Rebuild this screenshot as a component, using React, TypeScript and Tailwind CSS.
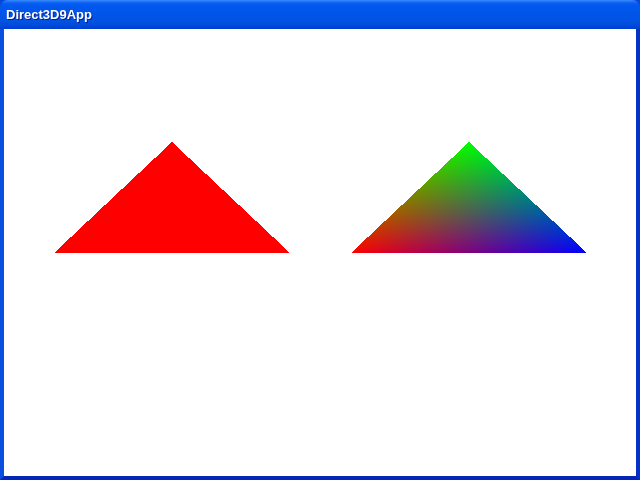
import React from "react";

export default function App() {
  return (
    <div className="w-[640px] h-[480px] flex flex-col bg-[#0846d8] overflow-hidden">
      <div className="h-[29px] shrink-0 rounded-t-[8px] bg-[linear-gradient(to_bottom,#3a8cfb_0px,#0a5ef4_3px,#0058ee_6px,#0055e8_14px,#0052e2_22px,#0048d8_26px,#003fcf_29px)] flex items-center pl-[6px]">
        <span className="text-white font-bold text-[13px] leading-none font-['Liberation_Sans',sans-serif] [text-shadow:1px_1px_0_#0a1e8a]">
          Direct3D9App
        </span>
      </div>
      <div className="flex-1 flex border-l-[4px] border-r-[4px] border-b-[4px] border-l-[#0a4fe0] border-r-[#0431c8] border-b-[#0325b8] bg-white">
        <svg className="w-full h-full block" viewBox="4 29 632 447" shapeRendering="crispEdges">
          <defs>
            <linearGradient id="gG" gradientUnits="userSpaceOnUse" x1="469" y1="142" x2="469" y2="253">
              <stop offset="0" stopColor="#00ff00" />
              <stop offset="1" stopColor="#000000" />
            </linearGradient>
            <linearGradient id="gR" gradientUnits="userSpaceOnUse" x1="351" y1="253" x2="461.8" y2="135.2">
              <stop offset="0" stopColor="#ff0000" />
              <stop offset="1" stopColor="#000000" />
            </linearGradient>
            <linearGradient id="gB" gradientUnits="userSpaceOnUse" x1="587" y1="253" x2="476.2" y2="135.2">
              <stop offset="0" stopColor="#0000ff" />
              <stop offset="1" stopColor="#000000" />
            </linearGradient>
          </defs>
          <polygon points="172,142 290,253 54,253" fill="#ff0000" />
          <g className="isolate">
            <polygon points="469,142 587,253 351,253" fill="url(#gG)" className="mix-blend-plus-lighter" />
            <polygon points="469,142 587,253 351,253" fill="url(#gR)" className="mix-blend-plus-lighter" />
            <polygon points="469,142 587,253 351,253" fill="url(#gB)" className="mix-blend-plus-lighter" />
          </g>
        </svg>
      </div>
    </div>
  );
}
